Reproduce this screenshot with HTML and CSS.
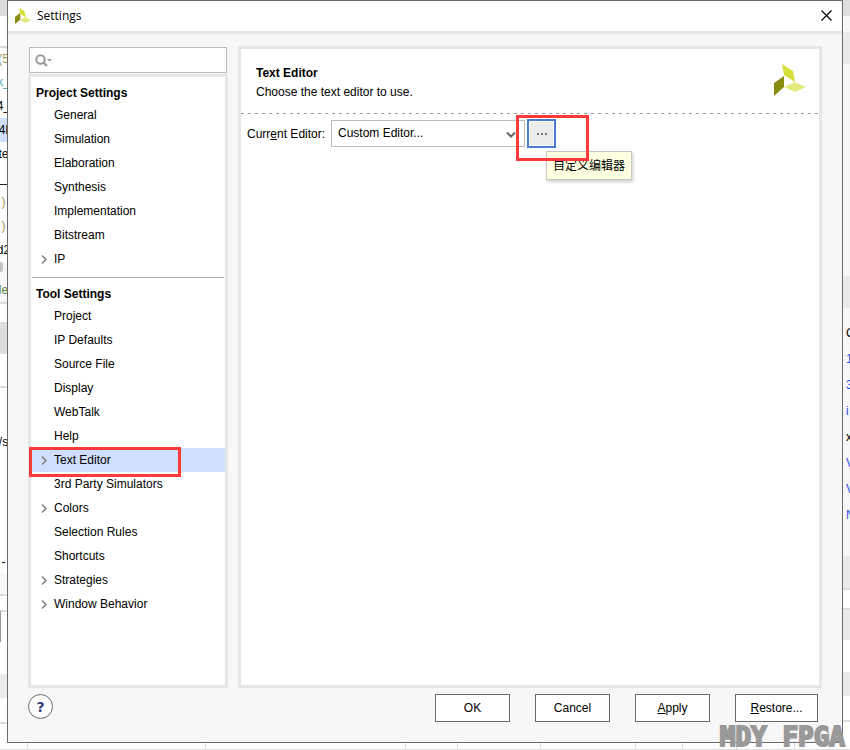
FILE: index.html
```html
<!DOCTYPE html>
<html lang="en">
<head>
    <meta charset="UTF-8">
    <meta name="viewport" content="width=device-width, initial-scale=1.0">
    <title>Settings</title>
    <link rel="stylesheet" href="styles.css">
</head>
<body>
    <div class="desktop">
        <!-- window behind the dialog, left edge -->
        <div class="edge edge-left">
            <div class="block h16 dark"></div>
            <div class="block h30"></div>
            <div class="line ruled olive">(5</div>
            <div class="line teal">k_</div>
            <div class="line">4_</div>
            <div class="line picked">4l</div>
            <div class="line">te</div>
            <div class="line">__</div>
            <div class="line olive">)</div>
            <div class="line olive">)</div>
            <div class="line">d2</div>
            <div class="block h16 pale"><div class="thumb"></div></div>
            <div class="line green pale">le</div>
            <div class="block h20 ruled"></div>
            <div class="block h32 dark"></div>
            <div class="block h32"></div>
            <div class="block h44 ruled"></div>
            <div class="line">/s</div>
            <div class="block h96"></div>
            <div class="line">-</div>
            <div class="block h20 pale"></div>
            <div class="block h16 ruled"></div>
            <div class="block h32 ruled tab"></div>
            <div class="block h32"></div>
            <div class="block h24 grey"></div>
            <div class="block h24"></div>
            <div class="block rest ruled"></div>
        </div>

        <div class="dialog">
            <div class="titlebar">
                <svg class="logo-small" viewBox="0 0 32 32">
                    <path fill="#d7df3b" d="M9 0 L19 6 L22 19 L10 12 Z"/>
                    <path fill="#8a8c10" d="M0 18 L10 10 L11 23 L0 32 Z"/>
                    <path fill="#e3eb7e" d="M10 24 L21 18 L32 24 L21 30 Z"/>
                </svg>
                <span class="title">Settings</span>
                <button class="close" aria-label="Close">
                    <svg viewBox="0 0 11 11"><path d="M0.5 0.5 L10.5 10.5 M10.5 0.5 L0.5 10.5"/></svg>
                </button>
            </div>

            <div class="content">
                <div class="sidebar">
                    <div class="search">
                        <svg viewBox="0 0 18 13">
                            <circle cx="5.5" cy="5.5" r="4.2" fill="none" stroke="#999" stroke-width="2"/>
                            <path d="M8.5 8.5 L12 12" stroke="#999" stroke-width="2.4"/>
                            <path d="M12 5 H17 L14.500 7.500 Z" fill="#999"/>
                        </svg>
                        <input type="text" aria-label="Search settings">
                    </div>
                    <nav class="tree">
                        <h2>Project Settings</h2>
                        <ul>
                            <li>General</li>
                            <li>Simulation</li>
                            <li>Elaboration</li>
                            <li>Synthesis</li>
                            <li>Implementation</li>
                            <li>Bitstream</li>
                            <li><svg class="arrow" viewBox="0 0 6 9"><path d="M1 0.5 L5 4.5 L1 8.5"/></svg>IP</li>
                        </ul>
                        <hr>
                        <h2>Tool Settings</h2>
                        <ul>
                            <li>Project</li>
                            <li>IP Defaults</li>
                            <li>Source File</li>
                            <li>Display</li>
                            <li>WebTalk</li>
                            <li>Help</li>
                            <li class="selected"><svg class="arrow" viewBox="0 0 6 9"><path d="M1 0.5 L5 4.5 L1 8.5"/></svg>Text Editor<span class="mark mark-row"></span></li>
                            <li>3rd Party Simulators</li>
                            <li><svg class="arrow" viewBox="0 0 6 9"><path d="M1 0.5 L5 4.5 L1 8.5"/></svg>Colors</li>
                            <li>Selection Rules</li>
                            <li>Shortcuts</li>
                            <li><svg class="arrow" viewBox="0 0 6 9"><path d="M1 0.5 L5 4.5 L1 8.5"/></svg>Strategies</li>
                            <li><svg class="arrow" viewBox="0 0 6 9"><path d="M1 0.5 L5 4.5 L1 8.5"/></svg>Window Behavior</li>
                        </ul>
                    </nav>
                </div>

                <div class="panel">
                    <div class="panel-header">
                        <div>
                            <h1>Text Editor</h1>
                            <p>Choose the text editor to use.</p>
                        </div>
                        <svg class="logo" viewBox="0 0 32 32">
                            <path fill="#d7df3b" d="M8 0 L19 7 L21 18 L10 11 Z"/>
                            <path fill="#8a8c10" d="M0 19 L10 12 L10 23 L0 32 Z"/>
                            <path fill="#e3eb7e" d="M10 23 L21 18 L32 23 L21 28 Z"/>
                        </svg>
                    </div>
                    <div class="field">
                        <label for="editor">Curr<u>e</u>nt Editor:</label>
                        <div class="select">
                            <select id="editor">
                                <option>Custom Editor...</option>
                            </select>
                            <svg viewBox="0 0 10 7"><path d="M1 1.500 L5 5.500 L9 1.500"/></svg>
                        </div>
                        <div class="browse">
                            <button aria-label="Custom editor">
                                <svg viewBox="0 0 10 2"><path d="M0 0h2v2h-2z M4 0h2v2h-2z M8 0h2v2h-2z"/></svg>
                            </button>
                            <div class="tooltip">自定义编辑器</div>
                            <span class="mark mark-browse"></span>
                        </div>
                    </div>
                </div>
            </div>

            <div class="footer">
                <button class="help">?</button>
                <div class="actions">
                    <button>OK</button>
                    <button>Cancel</button>
                    <button><u>A</u>pply</button>
                    <button class="wide"><u>R</u>estore...</button>
                </div>
            </div>
        </div>

        <!-- right edge -->
        <div class="edge edge-right">
            <div class="block h16 dark"></div>
            <div class="block h16 pale"></div>
            <div class="block h32 grey"></div>
            <div class="block h212 pale"></div>
            <div class="block h32 grey"></div>
            <div class="console">
                <div>C</div>
                <div class="blue">1</div>
                <div class="blue">3</div>
                <div class="blue">i</div>
                <div>x</div>
                <div class="blue">V</div>
                <div class="blue">V</div>
                <div class="blue">N</div>
            </div>
            <div class="block h32 grey"></div>
            <div class="block h20 ruled"></div>
            <div class="block h32 grey ruled"></div>
            <div class="block h32"></div>
            <div class="block h24 grey"></div>
            <div class="block h24"></div>
            <div class="block rest ruled"></div>
        </div>

        <div class="grid-strip">
            <span style="width: 28px"></span>
            <span style="width: 178px"></span>
            <span style="width: 200px"></span>
            <span style="width: 52px"></span>
            <span style="width: 83px"></span>
            <span style="width: 95px"></span>
            <span style="width: 47px"></span>
            <span style="width: 54px"></span>
            <span style="width: 58px"></span>
        </div>
        <div class="watermark">MDY FPGA</div>
    </div>
</body>
</html>
```
FILE: styles.css
```css
* {
    box-sizing: border-box;
}

body {
    margin: 0;
    background: #fff;
    color: #000;
    font: 12px/16px "Liberation Sans", Arial, "Noto Sans CJK SC", sans-serif;
}

button,
input,
select {
    font: inherit;
    color: inherit;
}

ul,
h1,
h2,
p {
    margin: 0;
    padding: 0;
    font-size: 12px;
}

ul {
    list-style: none;
}

.desktop {
    position: relative;
    display: grid;
    grid-template-columns: 7px minmax(0, 1fr) 7px;
    grid-template-rows: 1fr 7px;
    min-height: 100vh;
    overflow: hidden;
}

/* slivers of the main window */
.edge {
    display: flex;
    flex-direction: column;
    overflow: hidden;
    min-height: 0;
}

.block,
.line {
    flex-shrink: 0;
}

.line {
    display: flex;
    align-items: center;
    justify-content: center;
    height: 24px;
}

.h16 { height: 16px; }
.h20 { height: 20px; }
.h24 { height: 24px; }
.h30 { height: 30px; }
.h32 { height: 32px; }
.h44 { height: 44px; }
.h96 { height: 96px; }
.h212 { height: 212px; }

.rest {
    flex: 1;
}

.dark { background: #dedede; }
.grey { background: #ebebeb; }
.pale { background: #f7f7f7; }
.picked { background: #cfdffd; }
.olive { color: #a09850; }
.teal { color: #4aa5b5; }
.green { color: #5c8a3c; }
.blue { color: #2a50e8; }

.ruled {
    border-top: 2px solid #dcdcdc;
}

.tab {
    border-left: 1px solid #999;
}

.thumb {
    width: 3px;
    height: 10px;
    border-radius: 0 5px 5px 0;
    background: #c4c4c4;
}

.console {
    flex-shrink: 0;
    height: 248px;
    padding: 12px 0 0 3px;
    background: #f7f7f7;
    line-height: 26px;
}

.grid-strip {
    grid-column: 1 / -1;
    display: flex;
    border-bottom: 1px solid #ddd;
}

.grid-strip span {
    border-right: 1px solid #ddd;
}

.watermark {
    position: absolute;
    right: 5px;
    bottom: 0;
    color: #999;
    font: bold 26px/26px "DejaVu Sans Mono", monospace;
    -webkit-text-stroke: 2px #999;
}

/* dialog */
.dialog {
    display: flex;
    flex-direction: column;
    min-width: 0;
    border: 1px solid #6b6b6b;
    background: #f7f7f7;
}

.titlebar {
    display: flex;
    align-items: center;
    height: 33px;
    padding: 0 10px 1px 7px;
    border-bottom: 3px solid #e6e6e6;
    background: #fff;
    font-family: "Open Sans", "Noto Sans", sans-serif;
}

.logo-small {
    width: 16px;
    height: 16px;
    margin-right: 6px;
}

.close {
    width: 11px;
    height: 11px;
    margin-left: auto;
    padding: 0;
    border: 0;
    background: none;
}

.close svg {
    display: block;
    stroke: #000;
    stroke-width: 1.2;
}

.content {
    flex: 1;
    display: flex;
    gap: 10px;
    padding: 12px 20px 0;
}

.sidebar {
    display: flex;
    flex-direction: column;
    width: 200px;
}

.search {
    display: flex;
    align-items: center;
    height: 26px;
    margin: 1px;
    padding-left: 5px;
    border: 1px solid #bbb;
    background: #fff;
}

.search svg {
    width: 18px;
    height: 13px;
}

.search input {
    flex: 1;
    min-width: 0;
    border: 0;
    outline: 0;
    background: none;
}

.tree {
    flex: 1;
    padding-top: 7px;
    border: 3px solid #e6e6e6;
    background: #fff;
}

.tree h2 {
    padding-left: 5px;
    line-height: 19px;
}

.tree li {
    position: relative;
    height: 24px;
    padding-left: 23px;
    line-height: 24px;
}

.tree hr {
    height: 1px;
    margin: 6px 1px 7px;
    border: 0;
    background: #aaa;
}

.tree .selected {
    background: #cfdffd;
}

.arrow {
    position: absolute;
    left: 10px;
    top: 8px;
    width: 6px;
    height: 9px;
    fill: none;
    stroke: #777;
    stroke-width: 1.4;
}

.mark {
    position: absolute;
    border: 3px solid #fd3a3a;
    pointer-events: none;
}

.mark-row {
    left: -2px;
    top: -1px;
    width: 152px;
    height: 30px;
    z-index: 1;
}

.panel {
    flex: 1;
    min-width: 0;
    border: 3px solid #e6e6e6;
    background: #fff;
}

.panel-header {
    display: flex;
    justify-content: space-between;
    height: 65px;
    padding: 15px 13px 0 15px;
    background: repeating-linear-gradient(90deg, #999 0 3px, transparent 3px 7px) left bottom / 100% 1px no-repeat;
}

.panel-header h1,
.panel-header p {
    line-height: 19px;
}

.logo {
    width: 32px;
    height: 32px;
}

.field {
    display: flex;
    align-items: center;
    padding: 5px 6px;
}

.field label {
    width: 84px;
}

.select {
    position: relative;
    width: 194px;
    margin-right: 2px;
}

.select select {
    display: block;
    width: 100%;
    height: 27px;
    padding: 0 20px 1px 6px;
    border: 1px solid #bbb;
    border-radius: 0;
    background: #fff;
    appearance: none;
}

.select svg {
    position: absolute;
    right: 9px;
    top: 11px;
    width: 10px;
    height: 7px;
    fill: none;
    stroke: #666;
    stroke-width: 2;
}

.browse {
    position: relative;
}

.browse button {
    display: flex;
    align-items: center;
    justify-content: center;
    width: 29px;
    height: 29px;
    padding: 0;
    border: 2px solid #4a7ccf;
    background: #ececec;
    box-shadow: inset 0 0 0 1px #fff;
}

.browse button svg {
    width: 10px;
    height: 2px;
    fill: #777;
}

.mark-browse {
    left: -11px;
    top: -4px;
    width: 73px;
    height: 46px;
}

.tooltip {
    position: absolute;
    left: 19px;
    top: 32px;
    padding: 2px 6px 0;
    border: 1px solid #c8c8c8;
    background: #ffffe1;
    box-shadow: 1px 2px 3px rgba(0, 0, 0, 0.2);
    line-height: 25px;
    white-space: nowrap;
}

.footer {
    display: flex;
    justify-content: space-between;
    align-items: flex-start;
    padding: 6px 24px 20px 20px;
}

.help {
    width: 25px;
    height: 25px;
    padding: 0;
    border: 1px solid #6b6b6b;
    border-radius: 50%;
    background: #fff;
    color: #363c78;
    font: bold 14px/22px "DejaVu Sans", sans-serif;
}

.actions {
    display: flex;
    gap: 25px;
}

.actions button {
    width: 75px;
    height: 28px;
    padding: 0;
    border: 1px solid #6b6b6b;
    background: #fff;
}

.actions .wide {
    width: 83px;
}
```
